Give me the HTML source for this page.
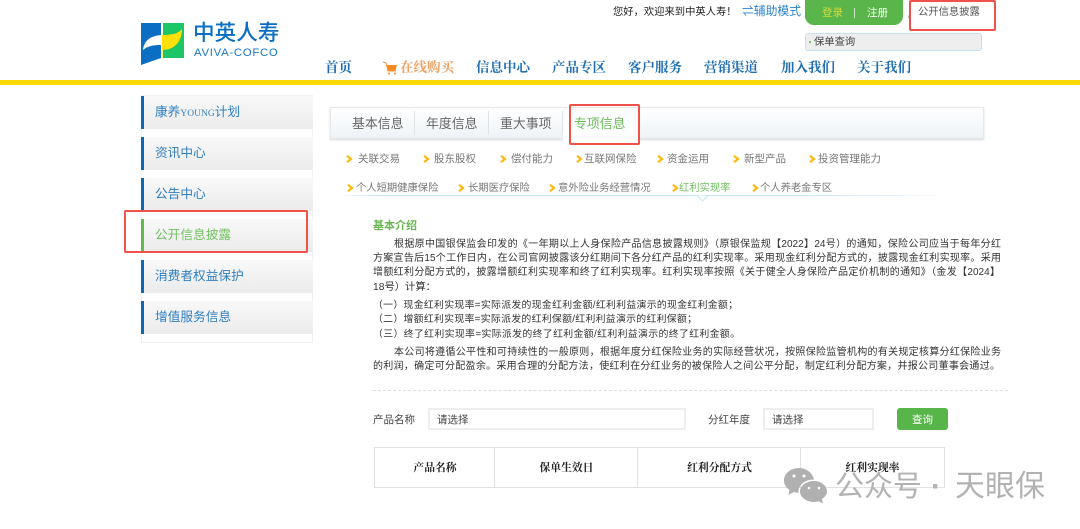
<!DOCTYPE html>
<html lang="zh"><head><meta charset="utf-8"><title>中英人寿</title>
<style>
html,body{margin:0;padding:0;background:#fff}
body{width:1080px;height:529px;overflow:hidden;position:relative;font-family:"Liberation Sans","Noto Sans CJK SC",sans-serif;color:#333}
.a{position:absolute;white-space:nowrap}
.nav{top:59px;font-size:13.5px;font-weight:bold;color:#1f6fb2;line-height:18px;font-family:"Liberation Serif","Noto Serif CJK SC",serif}
.side{left:141px;width:172px;height:33px;background:linear-gradient(#f9f9f9,#ebebeb);box-sizing:border-box;border-left:3px solid #0a68b4;padding-left:11px;font-size:12.7px;line-height:32px;color:#2f7fc0}
.tab{top:115px;font-size:12.9px;line-height:18px;color:#666}
.sep{top:111px;width:1px;height:24px;background:#dfe3e6}
.sub{font-size:10.5px;line-height:16px;color:#777}
.ar{width:7px;height:8px}
.ln{left:373px;font-size:10.3px;line-height:14px;color:#333}
.j{text-align-last:justify;white-space:normal;font-size:10px}
.l{font-size:9.9px}
.red{border:2px solid #f0524a;border-radius:2px;box-sizing:border-box}
.inp{top:408px;height:22px;box-sizing:border-box;border:2px solid #eee;background:#fff;font-size:10.5px;line-height:21px;padding-left:7px;color:#444}
.lab{top:413px;font-size:10.5px;line-height:15px;color:#444}
.th{top:460px;font-size:10.8px;font-weight:bold;line-height:16px;color:#222;text-align:center;font-family:"Liberation Serif","Noto Serif CJK SC",serif}
.vb{top:447px;width:1px;height:41px;background:#e2e2e2}
</style></head><body>

<svg class="a" style="left:140px;top:22px" width="46" height="45" viewBox="0 0 46 45">
<path d="M1 1H21V36L1 43Z" fill="#0a6fc4"/>
<path d="M23 1H44V36H23Z" fill="#1cc566"/>
<path d="M21 1h2v35h-2z" fill="#fff"/>
<path d="M3 28C4 18 11 14 21 13V23C13 23 8 24 3 28Z" fill="#fff"/>
<path d="M22 13C31 13 38 12 42 7C42 18 36 28 22 28Z" fill="#ffdf0a"/>
<path d="M22 28V36" stroke="#ffdf0a" stroke-width="1"/>
</svg>
<div class="a" style="left:193px;top:17px;font-size:21.6px;line-height:32px;color:#0a6fc4;font-weight:500">中英人寿</div>
<div class="a" style="left:194px;top:46px;font-size:11.4px;line-height:15px;color:#1b78c8;letter-spacing:.7px">AVIVA-COFCO</div>

<div class="a" style="left:613px;top:5px;font-size:10.3px;line-height:15px;color:#222">您好，欢迎来到中英人寿！</div>
<div class="a" style="left:742px;top:3px;font-size:11.8px;line-height:17px;color:#2b82cc">⇌辅助模式</div>
<div class="a" style="left:805px;top:0;width:98px;height:25px;background:#5ab54a;border-radius:0 0 9px 9px"></div>
<div class="a" style="left:822px;top:6px;font-size:10.5px;line-height:15px;color:#d5dd3c">登录</div>
<div class="a" style="left:854px;top:8px;width:1px;height:10px;background:#cfe8c8"></div>
<div class="a" style="left:867px;top:6px;font-size:10.5px;line-height:15px;color:#fff">注册</div>
<div class="a" style="left:908px;top:9px;font-size:9px;line-height:12px;color:#888">/</div>
<div class="a" style="left:918px;top:5px;font-size:10.3px;line-height:15px;color:#555">公开信息披露</div>
<div class="a red" style="left:909px;top:0;width:87px;height:31px"></div>
<div class="a" style="left:805px;top:33px;width:177px;height:18px;background:#eee;border:1px solid #c6e0f6;border-radius:3px;box-sizing:border-box"></div>
<div class="a" style="left:809px;top:41px;width:2px;height:2px;background:#7cc35e"></div>
<div class="a" style="left:814px;top:35px;font-size:10.3px;line-height:15px;color:#444">保单查询</div>

<div class="a nav" style="left:325px">首页</div>
<svg class="a" style="left:382px;top:61px" width="16" height="15" viewBox="0 0 16 15"><path d="M1 1L4 2L6 10H14" fill="none" stroke="#f2923a" stroke-width="1"/><path d="M5 4H15L13.5 9.5H6.3Z" fill="#f58a1f"/><circle cx="7" cy="12.5" r="1" fill="#f58a1f"/><circle cx="13" cy="12.5" r="1" fill="#f58a1f"/></svg>
<div class="a nav" style="left:400px;color:#f0a060">在线购买</div>
<div class="a nav" style="left:476px">信息中心</div>
<div class="a nav" style="left:552px">产品专区</div>
<div class="a nav" style="left:628px">客户服务</div>
<div class="a nav" style="left:704px">营销渠道</div>
<div class="a nav" style="left:781px">加入我们</div>
<div class="a nav" style="left:857px">关于我们</div>
<div class="a" style="left:0;top:80px;width:1080px;height:5px;background:#ffd800"></div>

<div class="a" style="left:141px;top:95px;width:172px;height:248px;border:1px solid #f0f0f0;box-sizing:border-box"></div>
<div class="a side" style="top:96px">康养<span style="font-family:'Liberation Serif',serif;font-size:9.5px">YOUNG</span>计划</div>
<div class="a side" style="top:137px">资讯中心</div>
<div class="a side" style="top:178px">公告中心</div>
<div class="a side" style="top:219px;border-left-color:#63bb4c;color:#72c062">公开信息披露</div>
<div class="a side" style="top:260px">消费者权益保护</div>
<div class="a side" style="top:301px">增值服务信息</div>
<div class="a red" style="left:124px;top:210px;width:184px;height:43px"></div>

<div class="a" style="left:330px;top:107px;width:654px;height:32px;box-sizing:border-box;border:1px solid #e8e8e8;background:linear-gradient(#fff,#eef3f7);box-shadow:0 1px 2px #d5dadf"></div>
<div class="a" style="left:563px;top:108px;width:76px;height:36px;background:linear-gradient(#fafcfd,#fff)"></div>
<div class="a tab" style="left:352px">基本信息</div>
<div class="a sep" style="left:414px"></div>
<div class="a tab" style="left:426px">年度信息</div>
<div class="a sep" style="left:488px"></div>
<div class="a tab" style="left:500px">重大事项</div>
<div class="a sep" style="left:562px"></div>
<div class="a tab" style="left:574px;color:#6cbb5a">专项信息</div>
<div class="a red" style="left:569px;top:104px;width:71px;height:41px"></div>

<svg width="0" height="0" style="position:absolute"><defs><symbol id="ar" viewBox="0 0 7 8"><path d="M1 0.8L5 4L1 7.2" fill="none" stroke="#fdb90f" stroke-width="2.2"/></symbol></defs></svg>
<svg class="a ar" style="left:346px;top:155px"><use href="#ar"/></svg><div class="a sub" style="left:358px;top:151px">关联交易</div>
<svg class="a ar" style="left:423px;top:155px"><use href="#ar"/></svg><div class="a sub" style="left:434px;top:151px">股东股权</div>
<svg class="a ar" style="left:500px;top:155px"><use href="#ar"/></svg><div class="a sub" style="left:511px;top:151px">偿付能力</div>
<svg class="a ar" style="left:576px;top:155px"><use href="#ar"/></svg><div class="a sub" style="left:584px;top:151px">互联网保险</div>
<svg class="a ar" style="left:657px;top:155px"><use href="#ar"/></svg><div class="a sub" style="left:667px;top:151px">资金运用</div>
<svg class="a ar" style="left:733px;top:155px"><use href="#ar"/></svg><div class="a sub" style="left:744px;top:151px">新型产品</div>
<svg class="a ar" style="left:809px;top:155px"><use href="#ar"/></svg><div class="a sub" style="left:818px;top:151px">投资管理能力</div>

<svg class="a ar" style="left:347px;top:184px"><use href="#ar"/></svg><div class="a sub" style="left:356px;top:181px;font-size:10.3px">个人短期健康保险</div>
<svg class="a ar" style="left:458px;top:184px"><use href="#ar"/></svg><div class="a sub" style="left:468px;top:181px;font-size:10.3px">长期医疗保险</div>
<svg class="a ar" style="left:549px;top:184px"><use href="#ar"/></svg><div class="a sub" style="left:558px;top:181px;font-size:10.3px">意外险业务经营情况</div>
<svg class="a ar" style="left:672px;top:184px"><use href="#ar"/></svg><div class="a sub" style="left:679px;top:181px;font-size:10.3px;color:#6fc060">红利实现率</div>
<svg class="a ar" style="left:752px;top:184px"><use href="#ar"/></svg><div class="a sub" style="left:760px;top:181px;font-size:10.3px">个人养老金专区</div>
<div class="a" style="left:335px;top:195px;width:620px;height:1px;background:linear-gradient(90deg,#fff,#c4e4f8 8%,#c4e4f8 75%,#fff)"></div>
<svg class="a" style="left:696px;top:195px" width="13" height="7"><path d="M0 .5H1L6.5 6L12 .5H13" fill="#fff" stroke="#c4e4f8"/></svg>

<div class="a" style="left:373px;top:218px;font-size:11px;font-weight:bold;line-height:16px;color:#69b552">基本介绍</div>
<div class="a ln j" style="left:394px;top:238px;width:607px">根据原中国银保监会印发的《一年期以上人身保险产品信息披露规则》（原银保监规【2022】24号）的通知，保险公司应当于每年分红</div>
<div class="a ln j" style="top:252px;width:628px">方案宣告后15个工作日内，在公司官网披露该分红期间下各分红产品的红利实现率。采用现金红利分配方式的，披露现金红利实现率。采用</div>
<div class="a ln j" style="top:266px;width:627px">增额红利分配方式的，披露增额红利实现率和终了红利实现率。红利实现率按照《关于健全人身保险产品定价机制的通知》（金发【2024】</div>
<div class="a ln" style="top:281px">18号）计算：</div>
<div class="a ln j l" style="top:299px;width:365px">（一）现金红利实现率=实际派发的现金红利金额/红利利益演示的现金红利金额；</div>
<div class="a ln j l" style="top:313px;width:324px">（二）增额红利实现率=实际派发的红利保额/红利利益演示的红利保额；</div>
<div class="a ln j l" style="top:328px;width:367px">（三）终了红利实现率=实际派发的终了红利金额/红利利益演示的终了红利金额。</div>
<div class="a ln j" style="left:394px;top:346px;width:607px">本公司将遵循公平性和可持续性的一般原则，根据年度分红保险业务的实际经营状况，按照保险监管机构的有关规定核算分红保险业务</div>
<div class="a ln j" style="top:360px;width:627px">的利润，确定可分配盈余。采用合理的分配方法，使红利在分红业务的被保险人之间公平分配，制定红利分配方案，并报公司董事会通过。</div>

<div class="a" style="left:373px;top:390px;width:635px;height:0;border-top:1px dashed #ddd"></div>

<div class="a lab" style="left:373px">产品名称</div>
<div class="a inp" style="left:428px;width:258px">请选择</div>
<div class="a lab" style="left:708px">分红年度</div>
<div class="a inp" style="left:763px;width:111px">请选择</div>
<div class="a" style="left:897px;top:408px;width:51px;height:22px;background:#57b54a;border-radius:3px;color:#fff;font-size:10.5px;line-height:24px;text-align:center">查询</div>

<div class="a" style="left:374px;top:447px;width:571px;height:41px;box-sizing:border-box;border:1px solid #e2e2e2"></div>
<div class="a vb" style="left:494px"></div>
<div class="a vb" style="left:637px"></div>
<div class="a vb" style="left:800px"></div>
<div class="a th" style="left:376px;width:118px">产品名称</div>
<div class="a th" style="left:496px;width:141px">保单生效日</div>
<div class="a th" style="left:639px;width:161px">红利分配方式</div>
<div class="a th" style="left:802px;width:141px">红利实现率</div>

<svg class="a" style="left:783px;top:467px" width="44" height="37" viewBox="0 0 44 37">
<path d="M16 1C7.5 1 1 6.7 1 13.5C1 17.500 3.200 20.800 6.500 23L5.500 28L11 25C12.500 25.500 14 25.700 15.500 25.800C14.800 19 21 12.500 31 12.500C29.500 6 23.500 1 16 1Z" fill="#b0b0b0"/>
<path d="M31 14C23 14 17 19 17 24.500C17 30 23 35 31 35C32.500 35 34 34.800 35.500 34.300L40 36.500L39 32C42 30 44 27.500 44 24.500C44 19 38.500 14 31 14Z" fill="#b0b0b0"/>
<circle cx="11" cy="9" r="1.500" fill="#fff"/><circle cx="21" cy="9" r="1.500" fill="#fff"/>
<circle cx="26" cy="21" r="1.300" fill="#fff"/><circle cx="36" cy="21" r="1.300" fill="#fff"/>
</svg>
<div class="a" style="left:835px;top:467px;font-size:29px;line-height:40px;color:#b2b2b2">公众号</div>
<div class="a" style="left:931px;top:467px;font-size:30px;font-weight:bold;line-height:40px;color:#b2b2b2">·</div>
<div class="a" style="left:955px;top:467px;font-size:30px;line-height:40px;color:#b2b2b2">天眼保</div>

</body></html>
